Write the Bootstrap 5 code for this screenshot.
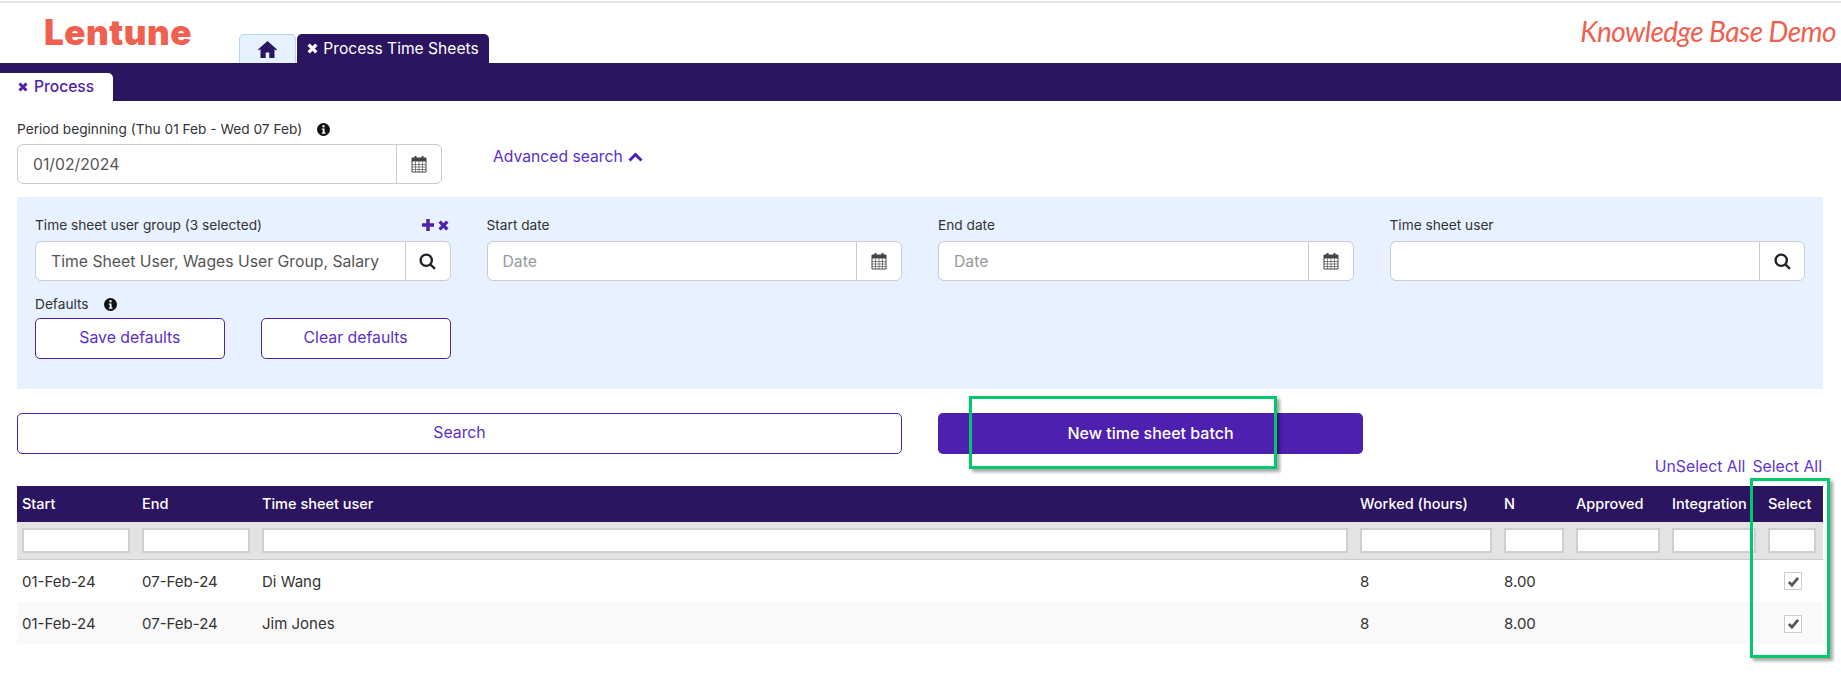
<!DOCTYPE html>
<html lang="en">
<head>
<meta charset="utf-8">
<title>Process Time Sheets</title>
<link href="https://cdn.jsdelivr.net/npm/bootstrap@5.3.0/dist/css/bootstrap.min.css" rel="stylesheet">
<style>
:root{--ink:#2b1460;--violet:#4d20b0;--coral:#f0604f}
html,body{height:700px;overflow:hidden}
body{font-family:Inter,"Liberation Sans",sans-serif;font-size:14px;color:#333;background:#fff;position:relative}
.topline{height:2px;margin-top:1px;background:#e5e5e5}
.headbar{height:60px}
.brand-word{font-family:Inter,"Liberation Sans",sans-serif;font-weight:900;font-size:35px;line-height:1;color:var(--coral);margin:12px 0 0 44px;width:195px;letter-spacing:.5px}
.demo-word{font-family:Lato,"Noto Sans",sans-serif;font-style:italic;font-size:28px;line-height:1;color:var(--coral);margin:14px 5px 0 auto;letter-spacing:-.55px}
.tabline{height:29px;margin-top:31px;gap:1px}
.tab-home,.tab-sheet{height:29px;border-radius:5px 5px 0 0;font-size:15.6px}
.tab-home{width:57px;background:#e6f1fe;border:1px solid #b5d5f5;border-bottom:0}
.tab-sheet{width:192px;background:var(--ink);color:#fff;gap:5px}
.subbar{height:38px;background:var(--ink);padding-top:10px}
.tab-process{width:113px;height:28px;background:#fff;color:var(--violet);font-weight:500;font-size:15.600px;border-radius:0 5px 0 0;padding-left:18px;gap:6px}
.mainpane{padding:18px 18px 0 17px}
.fieldlabel{font-size:13.7px;line-height:20px;color:#333;margin:0}
.infogap{gap:15px}
.plusx{padding-right:2px}
.period-box{width:425px;margin-top:5px}
.datefield,.datefield:focus{height:40px;font-size:15.75px;color:#555;border-color:#ccc;box-shadow:none;padding-left:15px}
.datefield::placeholder{color:#999}
.addonbox{width:46px;justify-content:center;background:#fff;border-color:#ccc;padding:0}
.advlink{font-size:15.7px;color:#5a30c8;text-decoration:none;margin:6px 0 0 51px;gap:5px}
.filterpanel{background:#e7f1ff;margin:13px 0 0;padding:18px 0 30px;height:192px}
.filterrow{--bs-gutter-x:36px}
.labelline{height:20px;margin-bottom:6px}
.defaultsline{margin-top:13px;margin-bottom:4px}
.btnpair{gap:36px}
.ghostbtn,.ghostbtn:hover{height:41px;background:#fff;border:1px solid var(--violet);color:#5a30c8;font-size:15.8px;border-radius:5px;display:flex;align-items:center;justify-content:center;padding:0 0 2px}
.btnpair .ghostbtn{flex:1 1 0}
.solidbtn,.solidbtn:hover{height:41px;width:425px;background:var(--violet);border:0;color:#fff;font-weight:500;font-size:16px;border-radius:5px;padding:0 0 2px}
.actionrow{margin-top:24px;gap:36px}
.searchbtn{width:885px}
.selectlinks{height:32px;gap:7px;font-size:15.8px;line-height:22px;padding:2px 1px 0 0}
.selectlinks a{color:#6236c9;text-decoration:none}
.sheet-table{table-layout:fixed;width:1806px;margin:0;font-size:14.5px;--bs-table-border-color:transparent}
.sheet-table th,.sheet-table td{padding:0 7px 0 5px;vertical-align:middle;border:0;overflow:hidden;white-space:nowrap;box-shadow:none}
.sheet-table thead tr.titles th{background:var(--ink);color:#fff;font-weight:500;height:36px;padding-bottom:1px}
.sheet-table thead tr.filters th{background:#e3e3e3;height:37px;border-bottom:1px solid #ccc}
.filters input{display:block;width:100%;height:25px;border:2px solid #d0d0d0;background:#fff;border-radius:0;padding:0}
.sheet-table tbody td{color:#333;background:#fff;height:43px;font-size:15px;padding-top:2px}
.sheet-table tbody tr.zebra td{background:#f9f9f9;height:42px}
.sheet-table td.pick,.sheet-table th.pick{padding-right:7px}
.sheet-table td.pick{padding:0;text-align:center}
.tick{display:inline-flex;width:18px;height:18px;border:1px solid #ccc;background:#fff;align-items:center;justify-content:center;vertical-align:middle}
.col-a{width:120px}.col-u{width:1098px}.col-w{width:144px}.col-n{width:72px}.col-x{width:96px}.col-s{width:60px}
.markbox{position:absolute;border:3px solid #00c96b;box-shadow:3px 3px 3px rgba(0,0,0,.35);pointer-events:none}
.mark-new{left:969px;top:396px;width:308px;height:73px}
.mark-sel{left:1750px;top:478px;width:80px;height:180px}
</style>
</head>
<body>
<div class="topline"></div>
<header class="headbar d-flex">
  <div class="brand-word">Lentune</div>
  <div class="tabline d-flex">
    <div class="tab-home d-flex align-items-center justify-content-center">
      <svg width="19" height="17" viewBox="0 0 19 17"><path d="M9.500 0 0 8.500l.8.9 1.700-1.400V17h5.200v-5.500h3.600V17h5.200V8l1.700 1.400.8-.9z" fill="#2b1460"/></svg>
    </div>
    <div class="tab-sheet d-flex align-items-center justify-content-center">
      <svg width="11" height="11" viewBox="0 0 10 10" fill="none" stroke="#fff" stroke-width="3"><path d="M1.500 1.500l7 7M8.500 1.500l-7 7"/></svg>
      <span>Process Time Sheets</span>
    </div>
  </div>
  <div class="demo-word">Knowledge Base Demo</div>
</header>
<div class="subbar">
  <div class="tab-process d-flex align-items-center">
    <svg width="10" height="10" viewBox="0 0 10 10" fill="none" stroke="#4d20b0" stroke-width="3"><path d="M1.500 1.500l7 7M8.500 1.500l-7 7"/></svg>
    <span>Process</span>
  </div>
</div>
<main class="mainpane">
  <p class="fieldlabel d-flex align-items-center infogap">Period beginning (Thu 01 Feb - Wed 07 Feb)
    <svg width="13" height="13" viewBox="0 0 12 12"><circle cx="6" cy="6" r="6" fill="#111"/><path d="M5 2h2v2H5zM4.400 5h2.600v3.800h.8V10H4.400V8.800h.9V6.200h-.9z" fill="#fff"/></svg>
  </p>
  <div class="d-flex">
    <div class="input-group period-box">
      <input class="form-control datefield" type="text" value="01/02/2024">
      <span class="input-group-text addonbox"><svg width="16" height="18" viewBox="0 0 16 18"><path d="M1 3h14v14H1z" fill="#fff" stroke="#444"/><path d="M1 3h14v3.500H1z" fill="#444"/><path d="M3.500 1h2v4h-2zM10.500 1h2v4h-2z" fill="#444"/><path d="M1 9.500h14M1 12h14M1 14.500h14M4.500 6.500V17M8 6.500V17M11.500 6.500V17" stroke="#666" stroke-width=".8" fill="none"/></svg></span>
    </div>
    <a class="advlink d-flex align-items-center align-self-start" href="#">Advanced search
      <svg width="15" height="10" viewBox="0 0 15 10" fill="none" stroke="#4d20b0" stroke-width="3"><path d="M1.500 8.500l6-6 6 6"/></svg>
    </a>
  </div>

  <section class="filterpanel">
    <div class="row filterrow g-0 mx-0">
      <div class="col-3 filtercell">
        <div class="labelline d-flex justify-content-between align-items-center">
          <span class="fieldlabel">Time sheet user group (3 selected)</span>
          <span class="d-flex align-items-center gap-1 plusx">
            <svg width="12" height="12" viewBox="0 0 12 12" fill="none" stroke="#4d20b0" stroke-width="3.500"><path d="M6 0v12M0 6h12"/></svg>
            <svg width="11" height="11" viewBox="0 0 10 10" fill="none" stroke="#4d20b0" stroke-width="3"><path d="M1.500 1.500l7 7M8.500 1.500l-7 7"/></svg>
          </span>
        </div>
        <div class="input-group">
          <input class="form-control datefield" type="text" value="Time Sheet User, Wages User Group, Salary">
          <span class="input-group-text addonbox"><svg width="17" height="17" viewBox="0 0 16 16" fill="none" stroke="#222" stroke-width="2.200"><circle cx="6.800" cy="6.800" r="5.300"/><path d="M10.800 10.800 15 15"/></svg></span>
        </div>
        <p class="fieldlabel defaultsline d-flex align-items-center infogap">Defaults
          <svg width="13" height="13" viewBox="0 0 12 12"><circle cx="6" cy="6" r="6" fill="#111"/><path d="M5 2h2v2H5zM4.400 5h2.600v3.800h.8V10H4.400V8.800h.9V6.200h-.9z" fill="#fff"/></svg>
        </p>
        <div class="d-flex btnpair">
          <a class="ghostbtn btn" href="#">Save defaults</a>
          <a class="ghostbtn btn" href="#">Clear defaults</a>
        </div>
      </div>
      <div class="col-3 filtercell">
        <div class="labelline fieldlabel">Start date</div>
        <div class="input-group">
          <input class="form-control datefield" type="text" placeholder="Date">
          <span class="input-group-text addonbox"><svg width="16" height="18" viewBox="0 0 16 18"><path d="M1 3h14v14H1z" fill="#fff" stroke="#444"/><path d="M1 3h14v3.500H1z" fill="#444"/><path d="M3.500 1h2v4h-2zM10.500 1h2v4h-2z" fill="#444"/><path d="M1 9.500h14M1 12h14M1 14.500h14M4.500 6.500V17M8 6.500V17M11.500 6.500V17" stroke="#666" stroke-width=".8" fill="none"/></svg></span>
        </div>
      </div>
      <div class="col-3 filtercell">
        <div class="labelline fieldlabel">End date</div>
        <div class="input-group">
          <input class="form-control datefield" type="text" placeholder="Date">
          <span class="input-group-text addonbox"><svg width="16" height="18" viewBox="0 0 16 18"><path d="M1 3h14v14H1z" fill="#fff" stroke="#444"/><path d="M1 3h14v3.500H1z" fill="#444"/><path d="M3.500 1h2v4h-2zM10.500 1h2v4h-2z" fill="#444"/><path d="M1 9.500h14M1 12h14M1 14.500h14M4.500 6.500V17M8 6.500V17M11.500 6.500V17" stroke="#666" stroke-width=".8" fill="none"/></svg></span>
        </div>
      </div>
      <div class="col-3 filtercell">
        <div class="labelline fieldlabel">Time sheet user</div>
        <div class="input-group">
          <input class="form-control datefield" type="text">
          <span class="input-group-text addonbox"><svg width="17" height="17" viewBox="0 0 16 16" fill="none" stroke="#222" stroke-width="2.200"><circle cx="6.800" cy="6.800" r="5.300"/><path d="M10.800 10.800 15 15"/></svg></span>
        </div>
      </div>
    </div>
  </section>

  <div class="actionrow d-flex">
    <a class="ghostbtn btn searchbtn" href="#">Search</a>
    <button class="solidbtn btn" type="button">New time sheet batch</button>
  </div>
  <div class="selectlinks d-flex justify-content-end">
    <a href="#">UnSelect All</a><a href="#">Select All</a>
  </div>

  <table class="table sheet-table">
    <colgroup><col class="col-a"><col class="col-a"><col class="col-u"><col class="col-w"><col class="col-n"><col class="col-x"><col class="col-x"><col class="col-s"></colgroup>
    <thead>
      <tr class="titles"><th>Start</th><th>End</th><th>Time sheet user</th><th>Worked (hours)</th><th>N</th><th>Approved</th><th>Integration</th><th class="pick">Select</th></tr>
      <tr class="filters"><th><input type="text"></th><th><input type="text"></th><th><input type="text"></th><th><input type="text"></th><th><input type="text"></th><th><input type="text"></th><th><input type="text"></th><th class="pick"><input type="text"></th></tr>
    </thead>
    <tbody>
      <tr><td>01-Feb-24</td><td>07-Feb-24</td><td>Di Wang</td><td>8</td><td>8.00</td><td></td><td></td><td class="pick"><span class="tick"><svg width="13" height="11" viewBox="0 0 14 12" fill="none" stroke="#555" stroke-width="3"><path d="M2 6.500 5.300 10 12 2"/></svg></span></td></tr>
      <tr class="zebra"><td>01-Feb-24</td><td>07-Feb-24</td><td>Jim Jones</td><td>8</td><td>8.00</td><td></td><td></td><td class="pick"><span class="tick"><svg width="13" height="11" viewBox="0 0 14 12" fill="none" stroke="#555" stroke-width="3"><path d="M2 6.500 5.300 10 12 2"/></svg></span></td></tr>
    </tbody>
  </table>
</main>
<div class="markbox mark-new"></div>
<div class="markbox mark-sel"></div>
<script src="https://cdn.jsdelivr.net/npm/bootstrap@5.3.0/dist/js/bootstrap.bundle.min.js"></script>
</body>
</html>
